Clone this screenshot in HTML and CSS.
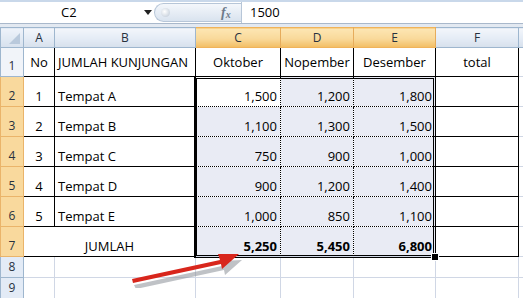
FILE: index.html
```html
<!DOCTYPE html>
<html lang="en">
<head>
    <meta charset="UTF-8">
    <title>Jumlah Kunjungan</title>
    <link rel="stylesheet" href="styles.css">
</head>
<body>
    <div class="formula-bar">
        <div class="name-box">
            <span class="name">C2</span>
            <span class="drop"></span>
        </div>
        <div class="fx-area">
            <span class="knob"></span>
            <span class="fx">f<sub>x</sub></span>
        </div>
        <div class="formula-input">1500</div>
    </div>
    <div class="gap"></div>
    <div class="sheet">
        <table class="grid">
            <colgroup>
                <col class="w-rh"><col class="w-a"><col class="w-b"><col class="w-c">
                <col class="w-d"><col class="w-e"><col class="w-f"><col class="w-g">
            </colgroup>
            <tr class="r-head">
                <th class="corner"><span class="tri"></span></th>
                <th class="ch">A</th>
                <th class="ch">B</th>
                <th class="ch sel">C</th>
                <th class="ch sel">D</th>
                <th class="ch sel">E</th>
                <th class="ch">F</th>
                <th class="ch"></th>
            </tr>
            <tr class="r-1">
                <th class="rh">1</th>
                <td class="b mid center">No</td>
                <td class="b mid">JUMLAH KUNJUNGAN</td>
                <td class="b mid center">Oktober</td>
                <td class="b mid center">Nopember</td>
                <td class="b mid center">Desember</td>
                <td class="b mid center">total</td>
                <td class="g"></td>
            </tr>
            <tr class="r-n">
                <th class="rh sel">2</th>
                <td class="b center">1</td>
                <td class="b">Tempat A</td>
                <td class="b s num active">1,500</td>
                <td class="b s num">1,200</td>
                <td class="b s num">1,800</td>
                <td class="b"></td>
                <td class="g"></td>
            </tr>
            <tr class="r-n">
                <th class="rh sel">3</th>
                <td class="b center">2</td>
                <td class="b">Tempat B</td>
                <td class="b s num">1,100</td>
                <td class="b s num">1,300</td>
                <td class="b s num">1,500</td>
                <td class="b"></td>
                <td class="g"></td>
            </tr>
            <tr class="r-n">
                <th class="rh sel">4</th>
                <td class="b center">3</td>
                <td class="b">Tempat C</td>
                <td class="b s num">750</td>
                <td class="b s num">900</td>
                <td class="b s num">1,000</td>
                <td class="b"></td>
                <td class="g"></td>
            </tr>
            <tr class="r-n">
                <th class="rh sel">5</th>
                <td class="b center">4</td>
                <td class="b">Tempat D</td>
                <td class="b s num">900</td>
                <td class="b s num">1,200</td>
                <td class="b s num">1,400</td>
                <td class="b"></td>
                <td class="g"></td>
            </tr>
            <tr class="r-n">
                <th class="rh sel">6</th>
                <td class="b center">5</td>
                <td class="b">Tempat E</td>
                <td class="b s num">1,000</td>
                <td class="b s num">850</td>
                <td class="b s num">1,100</td>
                <td class="b"></td>
                <td class="g"></td>
            </tr>
            <tr class="r-n">
                <th class="rh sel">7</th>
                <td class="b center" colspan="2">JUMLAH</td>
                <td class="b s num bold">5,250</td>
                <td class="b s num bold">5,450</td>
                <td class="b s num bold">6,800</td>
                <td class="b"></td>
                <td class="g"></td>
            </tr>
            <tr class="r-e">
                <th class="rh">8</th>
                <td class="g"></td><td class="g"></td><td class="g"></td><td class="g"></td>
                <td class="g"></td><td class="g"></td><td class="g"></td>
            </tr>
            <tr class="r-e">
                <th class="rh">9</th>
                <td class="g"></td><td class="g"></td><td class="g"></td><td class="g"></td>
                <td class="g"></td><td class="g"></td><td class="g"></td>
            </tr>
        </table>
        <div class="selection"></div>
        <div class="handle"></div>
        <svg class="arrow" width="120" height="40" viewBox="0 0 120 40">
            <path d="M4 34 L92 15 L90 10 L112 9 L95 24 L94 19 L6 38 Z" fill="#8a8f98" opacity="0.55" transform="translate(2 3)"/>
            <path d="M4 31 L92 12 L90 6 L111 6 L94 21 L93 16 L5 35 Z" fill="#d8261c"/>
        </svg>
    </div>
</body>
</html>
```

FILE: styles.css
```css
body {
    margin: 0;
    background: #fff;
    font-family: "Open Sans", "Liberation Sans", sans-serif;
    font-size: 13px;
    color: #000;
    overflow: hidden;
}

/* formula bar */
.formula-bar {
    display: flex;
    height: 21px;
    border-top: 2px solid #c9d8ea;
    border-bottom: 1px solid #a9b8cb;
    background: #fff;
}
.name-box {
    width: 154px;
    display: flex;
    align-items: center;
    position: relative;
}
.name {
    margin-left: 61px;
    line-height: 21px;
}
.drop {
    position: absolute;
    left: 144px;
    top: 8px;
    border-left: 4px solid transparent;
    border-right: 4px solid transparent;
    border-top: 5px solid #222;
}
.fx-area {
    width: 86px;
    margin: 1px 0;
    border-radius: 10px 0 0 10px;
    background: linear-gradient(#f4f7fb, #d9e3ef);
    border: 1px solid #b7c6d8;
    border-right: none;
    position: relative;
}
.knob {
    position: absolute;
    left: 6px;
    top: 4px;
    width: 9px;
    height: 9px;
    border-radius: 50%;
    background: radial-gradient(circle at 40% 40%, #fff, #b9c5d3);
}
.fx {
    position: absolute;
    left: 66px;
    top: 0;
    font-family: "Liberation Serif", serif;
    font-style: italic;
    font-weight: bold;
    font-size: 14px;
    color: #6d7a8a;
    line-height: 18px;
}
.fx sub {
    font-size: 10px;
    vertical-align: -1px;
}
.formula-input {
    flex: 1;
    border-left: 1px solid #b7c6d8;
    padding-left: 8px;
    line-height: 21px;
}
.gap {
    height: 3px;
    background: #e3e9f1;
}

/* sheet */
.sheet {
    position: relative;
}
.grid {
    border-collapse: collapse;
    table-layout: fixed;
    width: 528px;
}
.w-rh { width: 23px; }
.w-a { width: 31px; }
.w-b { width: 141px; }
.w-c { width: 85px; }
.w-d { width: 73px; }
.w-e { width: 82px; }
.w-f { width: 83px; }
.w-g { width: 10px; }

.grid th,
.grid td {
    padding: 0 3px;
    white-space: nowrap;
    overflow: hidden;
    vertical-align: bottom;
    line-height: 20px;
}
.r-head { height: 20px; }
.r-1 { height: 29px; }
.r-n { height: 30px; }
.r-e { height: 20px; }

.corner {
    background: linear-gradient(#eef3fa, #d7e1ee);
    border: 1px solid #9eb6ce;
    position: relative;
}
.tri {
    position: absolute;
    right: 3px;
    bottom: 3px;
    border-left: 11px solid transparent;
    border-bottom: 11px solid #b9c9dc;
}
.grid .ch {
    font-weight: normal;
    font-size: 12px;
    color: #27313e;
    background: linear-gradient(#f3f6fb 0%, #e4ebf5 55%, #d6e0ec 100%);
    border: 1px solid #9eb6ce;
    vertical-align: middle;
    line-height: 16px;
}
.grid .ch.sel {
    background: linear-gradient(#fde6b4 0%, #f9d99a 55%, #f2bd62 100%);
    border-color: #f0b35a #e6ac5c;
}
.rh {
    font-weight: normal;
    font-size: 12px;
    color: #27313e;
    text-align: center;
    background: #e3ebf6;
    border: 1px solid #9eb6ce;
    line-height: 18px;
}
.r-1 .rh { background: #f1f4f9; }
.rh.sel {
    background: #f9d99d;
    border-color: #eab46a;
}

.b { border: 1px solid #000; }
.g { border: 1px solid #d0d7e5; }
.grid .mid { vertical-align: middle; }
.center { text-align: center; }
.num { text-align: right; }
.bold { font-weight: bold; }
.s {
    background: #e9ebf4;
    border-style: dotted;
}
.active { background: #fff; }

/* selection outline */
.selection {
    position: absolute;
    left: 194px;
    top: 49px;
    width: 236px;
    height: 176px;
    border: 3px double #000;
    pointer-events: none;
}
.handle {
    position: absolute;
    left: 431px;
    top: 226px;
    width: 6px;
    height: 6px;
    background: #000;
    border: 1px solid #fff;
}
.arrow {
    position: absolute;
    left: 128px;
    top: 221px;
}
```
